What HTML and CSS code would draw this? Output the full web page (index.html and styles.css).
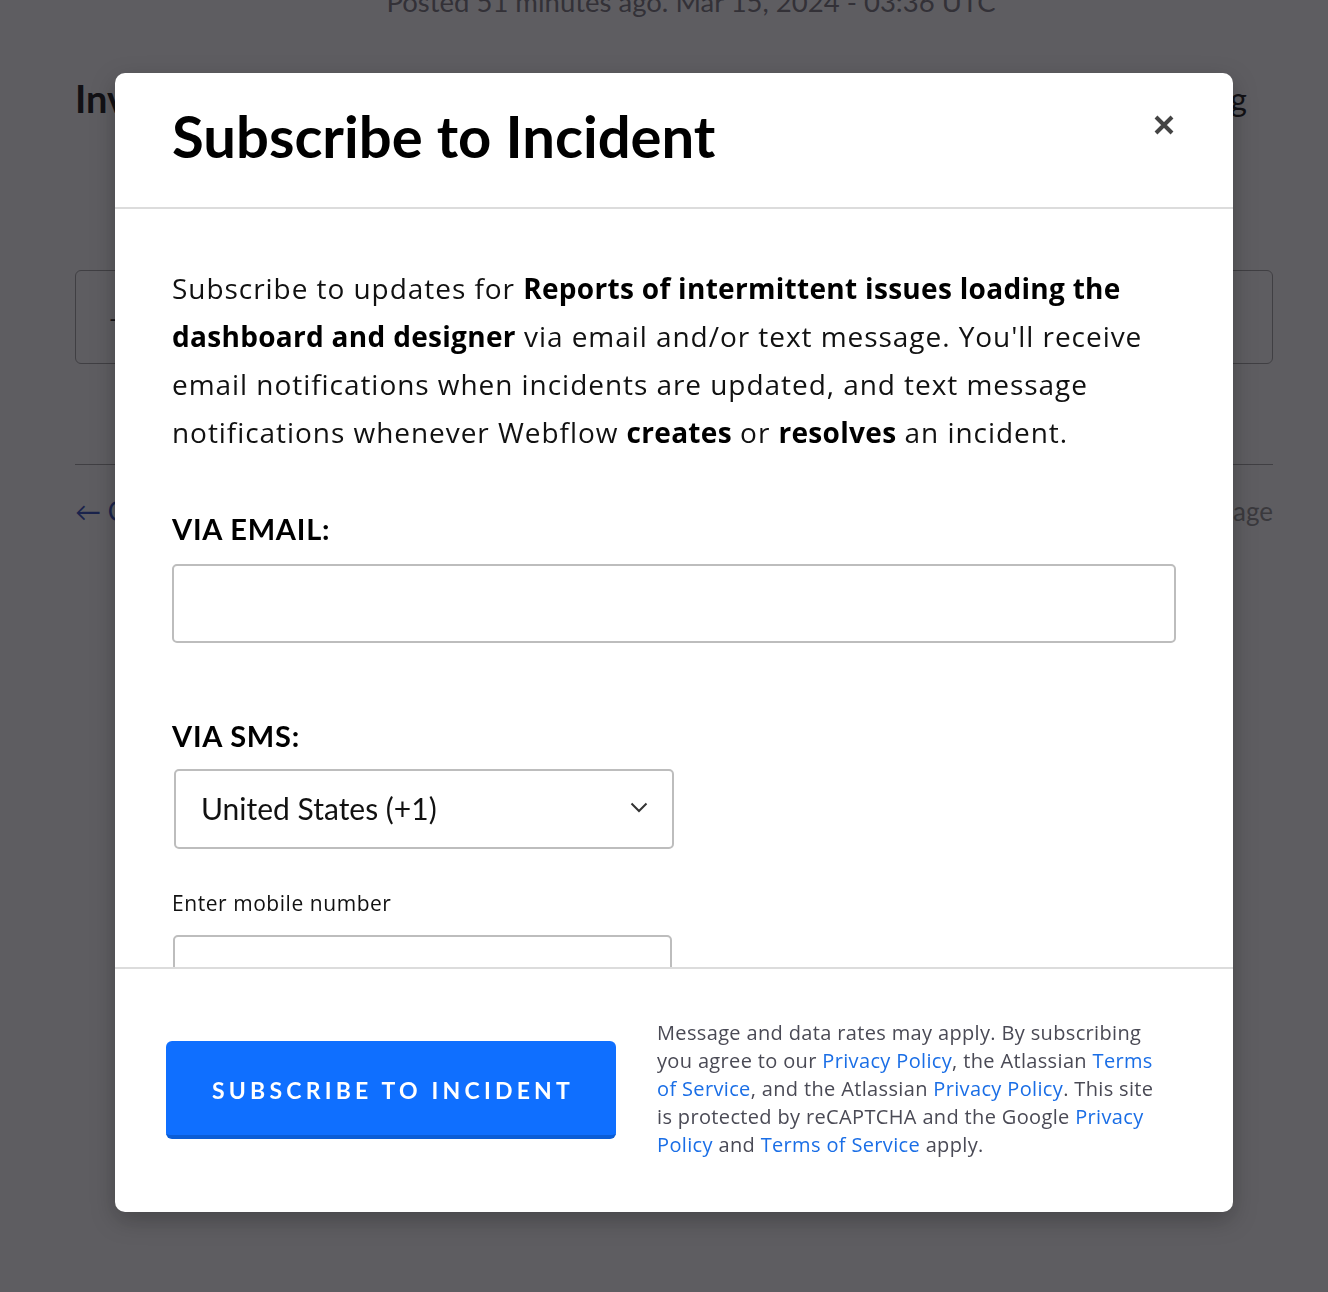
FILE: index.html
```html
<!DOCTYPE html>
<html lang="en">
<head>
<meta charset="utf-8">
<title>Subscribe to Incident</title>
<link rel="stylesheet" href="styles.css">
</head>
<body>
<div class="page">
  <div class="posted">Posted 51 minutes ago. Mar 15, 2024 - 03:36 UTC</div>
  <div class="heading-row">
    <h2 class="incident-title">Investigating</h2>
    <span class="incident-status">Investigating</span>
  </div>
  <div class="update-box"><span class="dash">-</span></div>
  <hr class="rule">
  <div class="nav-row">
    <a class="back-link">&larr; Current Status</a>
    <span class="powered">Powered by Atlassian Statuspage</span>
  </div>
</div>

<div class="overlay">
  <div class="modal">
    <div class="modal-header">
      <h1 class="modal-title">Subscribe to Incident</h1>
      <button class="close-btn" aria-label="Close">
        <svg width="22" height="22" viewBox="0 0 22 22"><path d="M3 3 L19 19 M19 3 L3 19" stroke="#444" stroke-width="4" stroke-linecap="butt"/></svg>
      </button>
    </div>
    <div class="modal-body">
      <p class="intro">Subscribe to updates for <b>Reports of intermittent issues loading the dashboard and designer</b> via email and/or text message. You'll receive email notifications when incidents are updated, and text message notifications whenever Webflow <b>creates</b> or <b>resolves</b> an incident.</p>
      <div class="field-label">VIA EMAIL:</div>
      <div class="text-input email-input"></div>
      <div class="field-label sms-label">VIA SMS:</div>
      <div class="select-box">
        <span>United States (+1)</span>
        <svg width="18" height="11" viewBox="0 0 18 11"><path d="M1.5 1.5 L9 9 L16.5 1.5" fill="none" stroke="#333" stroke-width="2"/></svg>
      </div>
      <div class="mobile-label">Enter mobile number</div>
      <div class="text-input mobile-input"></div>
    </div>
    <div class="modal-footer">
      <button class="subscribe-btn">SUBSCRIBE TO INCIDENT</button>
      <p class="legal">Message and data rates may apply. By subscribing you agree to our <a>Privacy Policy</a>, the Atlassian <a>Terms of Service</a>, and the Atlassian <a>Privacy Policy</a>. This site is protected by reCAPTCHA and the Google <a>Privacy Policy</a> and <a>Terms of Service</a> apply.</p>
    </div>
  </div>
</div>
</body>
</html>
```
FILE: styles.css
```css
html, body {
  margin: 0;
  padding: 0;
}
body {
  background: #ffffff;
  font-family: Lato, "Open Sans", Arial, sans-serif;
  color: #111;
  height: 1292px;
  overflow: hidden;
}
.page {
  width: 1198px;
  margin-left: 75px;
  margin-top: -14px;
}
.posted {
  text-align: center;
  font-size: 27.5px;
  color: #6e6c74;
  line-height: 32px;
  padding-left: 34px;
}
.heading-row {
  display: flex;
  justify-content: space-between;
  align-items: center;
  margin-top: 58px;
  height: 44px;
}
.incident-title {
  margin: 0;
  font-size: 38px;
  font-weight: 700;
  color: #000;
}
.incident-status {
  font-size: 32px;
  color: #000;
  margin-right: 26px;
}
.update-box {
  margin-top: 150px;
  height: 92px;
  border: 1px solid #999;
  border-radius: 6px;
  display: flex;
  align-items: center;
  padding-left: 33px;
  font-size: 24px;
}
.rule {
  margin: 100px 0 0;
  border: 0;
  border-top: 1px solid #999;
}
.nav-row {
  display: flex;
  justify-content: space-between;
  margin-top: 30px;
  font-size: 26px;
}
.back-link { color: #1c3fb7; }
.powered { color: #888; }

.overlay {
  position: fixed;
  inset: 0;
  background: rgba(26, 24, 30, 0.70);
  display: flex;
  align-items: flex-start;
}
.modal {
  margin-top: 73px;
  margin-left: 115px;
  width: 1118px;
  height: 1139px;
  background: #fff;
  border-radius: 10px;
  box-shadow: 0 8px 24px rgba(0,0,0,0.25);
  display: flex;
  flex-direction: column;
  overflow: hidden;
}
.modal-header {
  height: 134px;
  flex: none;
  border-bottom: 2px solid #dcdcdc;
  display: flex;
  align-items: center;
  justify-content: space-between;
  padding: 0 57px;
}
.modal-title {
  margin: 0 0 10px;
  font-size: 58px;
  font-weight: 700;
  color: #000;
  letter-spacing: 0;
}
.close-btn {
  border: 0;
  background: none;
  padding: 0;
  margin-top: -30px;
  margin-right: 1px;
  display: flex;
}
.modal-body {
  flex: none;
  height: 760px;
  overflow: hidden;
  padding: 55px 57px 0;
  box-sizing: border-box;
  border-bottom: 2px solid #dcdcdc;
}
.intro {
  margin: 0;
  font-family: "Open Sans", Lato, sans-serif;
  font-size: 28px;
  line-height: 48px;
  letter-spacing: 0.95px;
  color: #111;
}
.intro b { color: #000; font-weight: 700; letter-spacing: 0.3px; }
.field-label {
  margin-top: 56px;
  font-size: 29px;
  font-weight: 700;
  line-height: 34px;
  color: #000;
  letter-spacing: 0.8px;
}
.text-input {
  border: 2px solid #bdbdbd;
  border-radius: 5px;
  box-sizing: border-box;
  height: 79px;
  background: #fff;
}
.email-input {
  margin-top: 18px;
  width: 1004px;
}
.sms-label {
  margin-top: 76px;
}
.select-box {
  margin-top: 16px;
  margin-left: 2px;
  width: 500px;
  height: 80px;
  border: 2px solid #bdbdbd;
  border-radius: 5px;
  box-sizing: border-box;
  display: flex;
  align-items: center;
  justify-content: space-between;
  padding: 0 24px 3px 25px;
  font-size: 30px;
  color: #111;
}
.mobile-label {
  margin-top: 40px;
  font-family: "Open Sans", Lato, sans-serif;
  font-size: 21px;
  line-height: 28px;
  letter-spacing: 0.55px;
  color: #111;
}
.mobile-input {
  margin-top: 18px;
  margin-left: 1px;
  width: 499px;
}
.modal-footer {
  flex: 1;
  display: flex;
  align-items: flex-start;
  padding: 50px 0 0 51px;
}
.subscribe-btn {
  flex: none;
  margin-top: 22px;
  width: 450px;
  height: 98px;
  background: #0f6fff;
  border: 0;
  border-bottom: 4px solid #0b5dd6;
  border-radius: 6px;
  color: #fff;
  font-family: Lato, Arial, sans-serif;
  font-size: 23px;
  font-weight: 700;
  letter-spacing: 4.2px;
  padding: 4px 0 0 4px;
}
.legal {
  margin: 0 0 0 41px;
  width: 508px;
  font-family: "Open Sans", Lato, sans-serif;
  font-size: 20px;
  line-height: 28px;
  letter-spacing: 0.35px;
  color: #4a4a55;
}
.legal a { color: #1a6ee6; }
```
